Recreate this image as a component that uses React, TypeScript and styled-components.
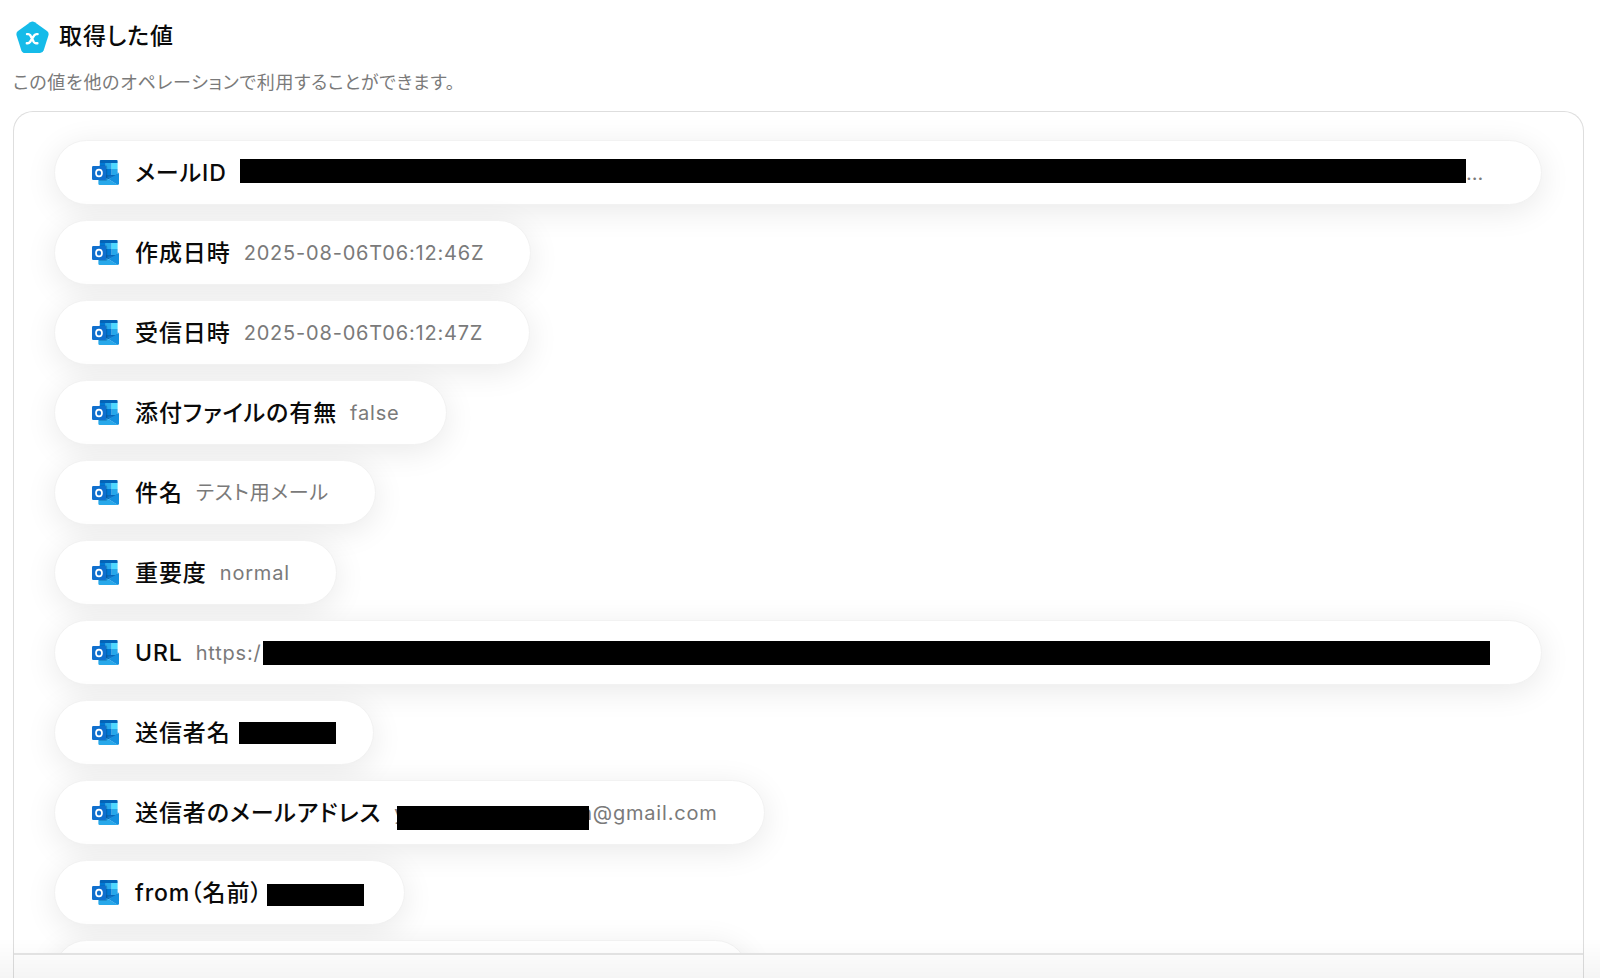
import React from "react";
import styled, { createGlobalStyle } from "styled-components";

const GlobalStyle = createGlobalStyle`
  *, *::before, *::after { box-sizing: border-box; }
  body {
    margin: 0;
    background: #fff;
    color: #111;
    font-family: Inter, "Noto Sans CJK JP", sans-serif;
    font-feature-settings: "palt";
  }
  h1, p, span { letter-spacing: 0.04em; }
`;

const Page = styled.main`
  display: flex;
  flex-direction: column;
  height: 100vh;
  padding: 16px 16px 0 13px;
  overflow: hidden;
`;

const Heading = styled.header`
  display: flex;
  align-items: center;
  gap: 10px;
  height: 42px;
  padding-left: 3px;
`;

const Title = styled.h1`
  margin: 0 0 2px;
  font-size: 23px;
  line-height: 32px;
  font-weight: 500;
  color: #0a0a0a;
`;

const Description = styled.p`
  margin: 12px 0 15px;
  font-size: 18px;
  line-height: 26px;
  color: #7a7a7a;
`;

const Panel = styled.section`
  flex: 1;
  min-height: 0;
  display: flex;
  flex-direction: column;
  border: 1px solid #dedede;
  border-bottom: 0;
  border-radius: 20px 20px 0 0;
`;

const ValueList = styled.ul`
  flex: 1;
  min-height: 0;
  margin: 0;
  padding: 28px 41px 0 40px;
  list-style: none;
  display: flex;
  flex-direction: column;
  align-items: flex-start;
  gap: 15px;
  overflow: hidden;
  border-bottom: 2px solid #e6e6e6;
`;

const PanelFooter = styled.div`
  flex: none;
  height: 23px;
`;

const BottomFade = styled.div`
  position: fixed;
  left: 0;
  right: 0;
  bottom: 0;
  height: 40px;
  pointer-events: none;
  background: linear-gradient(to bottom, rgba(0, 0, 0, 0), rgba(0, 0, 0, 0.04));
`;

const Pill = styled.li<{ $end?: number; $wide?: boolean; $minWidth?: number }>`
  flex: none;
  display: flex;
  align-items: center;
  height: 65px;
  min-width: ${(p) => p.$minWidth ?? 0}px;
  max-width: 100%;
  width: ${(p) => (p.$wide ? "100%" : "auto")};
  padding: 0 ${(p) => p.$end ?? 46}px 0 37px;
  border: 1px solid #f2f2f2;
  border-radius: 33px;
  background: #fff;
  box-shadow: 0 6px 32px rgba(0, 0, 0, 0.09);
  white-space: nowrap;
`;

const Label = styled.span`
  margin-left: 16px;
  font-size: 23px;
  line-height: 32px;
  font-weight: 500;
  color: #0a0a0a;
`;

const Value = styled.span`
  margin-left: 13px;
  font-size: 20px;
  line-height: 32px;
  color: #7a7a7a;
`;

const Ending = styled(Value)`
  margin-left: 0;
`;

const Redaction = styled.span<{ $width?: number; $tall?: boolean; $before?: number; $after?: number; $drop?: number }>`
  position: relative;
  flex: ${(p) => (p.$width ? "none" : "1")};
  width: ${(p) => (p.$width ? `${p.$width}px` : "auto")};
  height: ${(p) => (p.$tall ? 24 : 22)}px;
  margin-left: ${(p) => p.$before ?? 0}px;
  margin-right: ${(p) => p.$after ?? 0}px;
  margin-top: ${(p) => p.$drop ?? 0}px;
  background: #000;
`;

const PentagonIcon = () => (
  <svg width="33" height="33" viewBox="0 0 33 33" aria-hidden="true">
    <path
      d="M14.2 1.2 Q16.5 -.4 18.8 1.2 L31 10.1 Q33.2 11.8 32.4 14.4 L27.7 29.2 Q26.8 32 24 32 H9 Q6.2 32 5.3 29.2 L.6 14.4 Q-.2 11.8 2 10.1 Z"
      fill="#15bbe9"
    />
    <path
      d="M11 13.1 h1.2 q1.3 0 2 1.1 l3.6 6.8 q.7 1.2 2 1.2 h1.6 M21.6 13.1 h-1 q-1.4 0-2.2 1.1 l-4.4 6.8 q-.9 1.2-2.2 1.2 h-1"
      fill="none"
      stroke="#fff"
      strokeWidth="2.4"
      strokeLinecap="round"
    />
  </svg>
);

const OutlookIcon = () => (
  <svg width="27" height="25" viewBox="0 0 27 25" aria-hidden="true">
    <path d="M7.8 1 a1 1 0 0 1 1-1 H24.6 a1 1 0 0 1 1 1 V3 H7.8 Z" fill="#0364b8" />
    <path d="M7.8 3 H13.8 V9 H7.8 Z" fill="#0078d4" />
    <path d="M13.8 3 H19.7 V9 H13.8 Z" fill="#28a8ea" />
    <path d="M19.7 3 H25.6 V9 H19.7 Z" fill="#50d9ff" />
    <path d="M7.8 9 H13.8 V15 H7.8 Z" fill="#0364b8" />
    <path d="M13.8 9 H19.7 V15 H13.8 Z" fill="#0078d4" />
    <path d="M19.7 9 H25.6 V15 H19.7 Z" fill="#28a8ea" />
    <path d="M7.8 15 H25.6 L17 19 H7.8 Z" fill="#0a67b7" />
    <path d="M25.6 12.6 L27 13 L17.5 18.6 L15 17 L25.6 15 Z" fill="#0f78cc" />
    <path d="M6.4 13.2 L16.6 19.2 L26 25 H7.6 Q6.4 25 6.4 23.8 Z" fill="#28a8ea" />
    <path d="M27 13 L16.6 19.2 L25.8 25 Q27 24.8 27 23.6 Z" fill="#1490df" />
    <path d="M7 5.6 H14 a1.2 1.2 0 0 1 1.2 1.2 V19.6 a1.2 1.2 0 0 1-1.2 1.2 H7 Z" fill="#053a70" opacity=".3" />
    <rect x="0" y="6" width="14" height="14" rx="1.2" fill="#0f6fce" />
    <ellipse cx="7" cy="13" rx="3" ry="3.4" fill="none" stroke="#fff" strokeWidth="1.7" />
  </svg>
);

type Item = { label: string; value: string };

const details: Item[] = [
  { label: "作成日時", value: "2025-08-06T06:12:46Z" },
  { label: "受信日時", value: "2025-08-06T06:12:47Z" },
  { label: "添付ファイルの有無", value: "false" },
  { label: "件名", value: "テスト用メール" },
  { label: "重要度", value: "normal" },
];

export default function App() {
  return (
    <>
      <GlobalStyle />
      <Page lang="ja">
        <Heading>
          <PentagonIcon />
          <Title>取得した値</Title>
        </Heading>
        <Description>この値を他のオペレーションで利用することができます。</Description>
        <Panel>
          <ValueList>
            <Pill $wide $end={57}>
              <OutlookIcon />
              <Label>メールID</Label>
              <Redaction $tall $before={13} $drop={-3} />
              <Ending>…</Ending>
            </Pill>
            {details.map((item) => (
              <Pill key={item.label}>
                <OutlookIcon />
                <Label>{item.label}</Label>
                <Value>{item.value}</Value>
              </Pill>
            ))}
            <Pill $wide $end={51}>
              <OutlookIcon />
              <Label>URL</Label>
              <Value>https:/</Value>
              <Redaction $tall $before={1} />
            </Pill>
            <Pill $end={37}>
              <OutlookIcon />
              <Label>送信者名</Label>
              <Redaction $width={97} $before={8} />
            </Pill>
            <Pill>
              <OutlookIcon />
              <Label>送信者のメールアドレス</Label>
              <Value>y</Value>
              <Redaction $tall $width={192} $before={-9} $after={-9} $drop={10} />
              <Ending>n@gmail.com</Ending>
            </Pill>
            <Pill $end={40}>
              <OutlookIcon />
              <Label>from（名前）</Label>
              <Redaction $width={97} $before={4} $drop={4} />
            </Pill>
            <Pill $minWidth={694} />
          </ValueList>
          <PanelFooter />
        </Panel>
        <BottomFade />
      </Page>
    </>
  );
}
